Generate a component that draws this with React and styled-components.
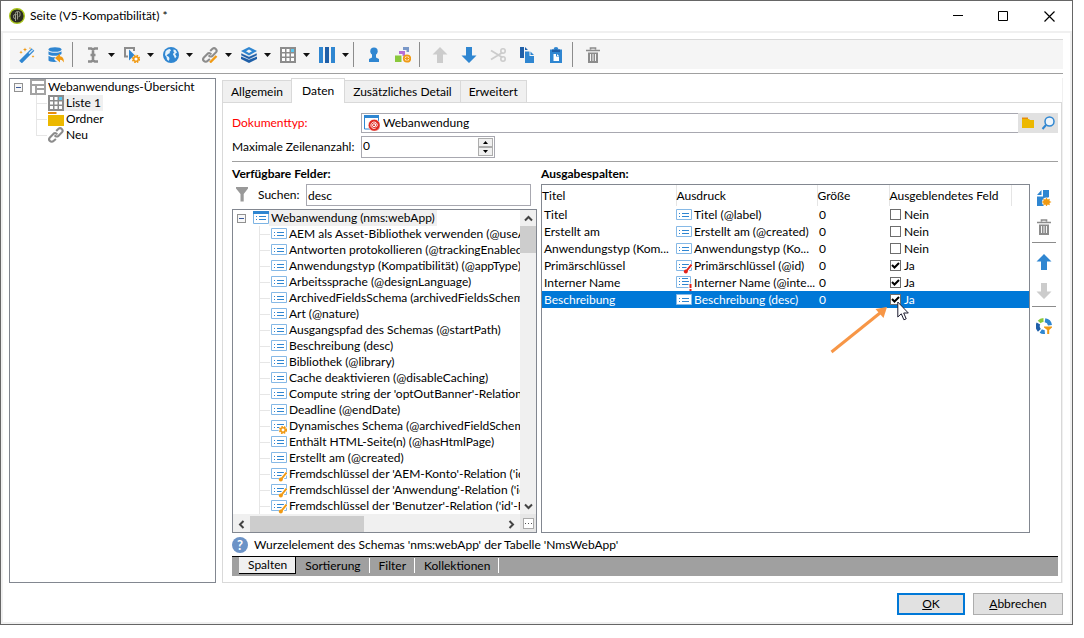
import React, { useState } from "react";
import styled, { createGlobalStyle, css } from "styled-components";

const Global = createGlobalStyle`
  * { box-sizing: border-box; }
  body {
    margin: 0;
    background: #fff;
    color: #000;
    font: 12px/16px Lato, "Open Sans", sans-serif;
  }
  button, input { font: inherit; color: inherit; margin: 0; }
  button { border: 0; padding: 0; background: none; }
  ul { list-style: none; margin: 0; padding: 0; }
  svg { display: block; flex: none; }
`;

/* ---------- icons ---------- */

const Icon = ({ size = 16, children, ...rest }) => (
  <svg width={size} height={size} viewBox="0 0 16 16" fill="none" aria-hidden="true" {...rest}>
    {children}
  </svg>
);

const BLUE = "#2f86d1";
const NAVY = "#1f5fa8";
const GREY = "#8c8c8c";
const ORANGE = "#f09a14";

const WandIcon = () => (
  <Icon>
    <path d="M1.500 15 14 2.500" stroke={BLUE} strokeWidth="3.800" />
    <path d="M10 6.500 13.800 2.700" stroke="#cfe5f7" strokeWidth="1.400" />
    <path d="M6 .5 6.600 2 8 2.600 6.600 3.200 6 4.700 5.400 3.200 4 2.600 5.400 2ZM2 3.500 2.500 4.800 3.700 5.300 2.500 5.800 2 7 1.500 5.800.3 5.300 1.500 4.800ZM14 8l.4 1 1 .5-1 .4-.4 1-.4-1-1-.4 1-.5ZM11 0l.3.800.8.3-.8.3-.3.800-.3-.8-.8-.3.800-.3Z" fill={ORANGE} />
  </Icon>
);
const DatabaseIcon = () => (
  <Icon>
    <ellipse cx="7" cy="2.500" rx="6.500" ry="2.300" fill={BLUE} />
    <path d="M.5 4.300c2.500 2 10.500 2 13 0V7c-2 2-10.500 2.500-13 .5ZM.5 8.700c2.500 1.700 5 1.700 7 1.500L6 12c1 1.500 2 2 3.500 2.600C5 15.400.8 14.500.5 13.500Z" fill={BLUE} />
    <path d="M12 6.500v2.700c3 .3 4.200 3 3.700 6.300-1-2-2-2.700-3.700-2.700v2.700L7 11Z" fill={ORANGE} />
  </Icon>
);
const CursorTextIcon = () => (
  <Icon>
    <path d="M3 1.500h3.200L8 2.700l1.800-1.200H13M3 14.500h3.200L8 13.300l1.800 1.200H13M8 2.500v11M5.500 8h5" stroke={GREY} strokeWidth="2.600" />
  </Icon>
);
const Gear = ({ cx, cy, r }) => (
  <g>
    <circle cx={cx} cy={cy} r={r} stroke={ORANGE} strokeWidth="1.800" strokeDasharray="1.600 1" fill="none" />
    <circle cx={cx} cy={cy} r={r - 1} stroke={ORANGE} strokeWidth="1.500" fill="#fff" />
  </g>
);
const PlayGearIcon = () => (
  <Icon>
    <path d="M4 9.500H1V1h9v3" stroke={GREY} strokeWidth="2" />
    <path d="M5 2.500 10.500 8 5 13.500Z" fill={BLUE} />
    <Gear cx={12} cy={12} r={3.300} />
  </Icon>
);
const GlobeIcon = () => (
  <Icon>
    <circle cx="8" cy="8" r="8" fill={BLUE} />
    <path d="M2.500 4.500c1-1.500 2.500-2.500 4.500-2.500l1 1.500L6.500 5l.5 1-2 1-1.500 1.500L6 10l.5 2-1 2L4 12.500 3.500 10 2 8ZM10.500 2.500l2 .5L14 5.500 12 7l1.500 2.500L12 11.500l-1-2.500L10 7.500l.5-1.500 1-.5-1-1Z" fill="#e5f2fb" />
  </Icon>
);
const Links = () => (
  <path d="M6.800 8.200a2.400 2.400 0 0 0 3.400 1l3.900-4a2.500 2.500 0 0 0-3.600-3.400L8.200 4M9.200 7.500a2.400 2.400 0 0 0-3.400-1l-3.900 4a2.500 2.500 0 0 0 3.600 3.500L7.900 12" stroke={GREY} strokeWidth="2.100" />
);
const LinkIcon = () => (
  <Icon>
    <Links />
  </Icon>
);
const LinkPenIcon = () => (
  <Icon>
    <Links />
    <path d="m8 15.500 6.500-6.500" stroke={ORANGE} strokeWidth="2.400" />
  </Icon>
);
const LayersIcon = () => (
  <Icon>
    <path d="M0 9.500 8 12.500l8-3v2.500L8 16l-8-4Z" fill={NAVY} />
    <path d="M0 6 8 9.500 16 6v2.500l-8 4-8-4Z" fill={NAVY} stroke="#f5f5f5" strokeWidth=".5" />
    <path d="M0 4 8 0l8 4-8 4.500Z" fill={BLUE} />
    <path d="m5 4.200 3-1.700 3 1.700L8 6Z" fill="#f5f5f5" />
  </Icon>
);
const GridIcon = () => (
  <Icon>
    <path d="M0 0h16v16H0Z" fill={GREY} />
    <path d="M2 2h3v3H2ZM6.500 2h3v3h-3ZM2 6.500h3v3H2ZM6.500 6.500h3v3h-3ZM11 6.500h3v3h-3ZM2 11h3v3H2ZM6.500 11h3v3h-3ZM11 11h3v3h-3Z" fill="#fff" />
    <path d="M11 2h3v3h-3Z" fill="#5bc8f0" />
  </Icon>
);
const ColumnsIcon = () => (
  <Icon>
    <path d="M0 0h4v16H0ZM12 0h4v16h-4Z" fill={BLUE} />
    <path d="M6 0h4v16H6Z" fill={NAVY} />
  </Icon>
);
const PersonIcon = () => (
  <Icon>
    <circle cx="8" cy="4.200" r="3.700" fill={BLUE} />
    <path d="M6 6h4v4.500l3 1.500v3H3v-3l3-1.500Z" fill={BLUE} />
  </Icon>
);
const BlocksIcon = () => (
  <Icon>
    <path d="M8 0h6v5h-2.500V3H8Z" fill="#7a98c8" />
    <path d="M4 4h6v5H7.500V7H4Z" fill="#b66fd8" />
    <path d="M0 8.500h6.500V15H0Z" fill="#8ac83c" />
    <circle cx="12" cy="11.500" r="3.200" stroke={ORANGE} strokeWidth="1.800" fill="#fff" />
    <path d="M12 9.500v4M10 11.500h4" stroke={ORANGE} strokeWidth="1.600" />
  </Icon>
);
const ArrowIcon = ({ down, muted }) => (
  <Icon transform={down ? "rotate(180)" : undefined}>
    <path d="M8 0 15.500 7.500H11V16H5V7.500H.5Z" fill={muted ? "#cccccc" : BLUE} />
  </Icon>
);
const ScissorsIcon = () => (
  <Icon>
    <path d="m1 3.500 11.500 7M1 12.500l11.500-7" stroke="#ccc" strokeWidth="1.800" />
    <circle cx="13" cy="4" r="2.200" stroke="#ccc" strokeWidth="1.600" />
    <circle cx="13" cy="12" r="2.200" stroke="#ccc" strokeWidth="1.600" />
  </Icon>
);
const CopyIcon = () => (
  <Icon>
    <path d="M1 0h4v11H1ZM6 0l3 3H6Z" fill={NAVY} />
    <path d="M6 4.500h4.500V9H15v7H6ZM11.500 4.500 15 8h-3.500Z" fill={BLUE} />
  </Icon>
);
const PasteIcon = () => (
  <Icon>
    <path d="M2 2.500h12V16H2Z" fill={BLUE} />
    <path d="M4 2.500h2.500a1.500 1.500 0 0 1 3 0H12V5H4Z" fill={NAVY} />
    <path d="M8 0a2.300 2.300 0 0 0-2.300 2.500h4.600A2.300 2.300 0 0 0 8 0Z" fill={BLUE} />
    <path d="M5.500 7H8v2.500h3V14H5.500ZM9 7l2 2H9Z" fill="#fff" />
  </Icon>
);
const TrashIcon = () => (
  <Icon>
    <path d="M5.500 2.500V1h5v1.500M1 3.500h14" stroke={GREY} strokeWidth="1.600" />
    <path d="M3 5.500h10V16H3Z" fill={GREY} />
    <path d="M5.500 7v7M8 7v7M10.500 7v7" stroke="#f5f5f5" strokeWidth="1" />
  </Icon>
);
const PageIcon = () => (
  <Icon>
    <path d="M0 0h16v16H0Z" fill="#a3a3a3" />
    <path d="M2 2h12v3H2ZM2 7h3v7H2ZM7 7h7v2H7ZM7 11h7v3H7Z" fill="#fff" />
  </Icon>
);
const FolderIcon = () => (
  <Icon>
    <path d="M0 1h8.500v2H0Z" fill="#e88e0c" />
    <path d="M0 4h16v11H0Z" fill="#ecb800" />
  </Icon>
);
const OpenFolderIcon = () => (
  <Icon>
    <path d="M2 2.500h6V4H2Z" fill="#e88e0c" />
    <path d="M2 4h7l1 1h4v8H2Z" fill="#ecb800" />
  </Icon>
);
const SearchIcon = () => (
  <Icon>
    <circle cx="9.500" cy="6.500" r="4.500" stroke={BLUE} strokeWidth="1.500" fill="#eef5fb" />
    <path d="m6 10-3.500 4" stroke={BLUE} strokeWidth="2" />
  </Icon>
);
const FunnelIcon = () => (
  <Icon>
    <path d="M2 0h12v1.500L9.700 7v7.500H6.500V7L2 1.500Z" fill="#999" />
  </Icon>
);
const WebAppIcon = () => (
  <Icon>
    <path d="M.5 1.500h14V14H.5Z" fill="#fff" stroke={BLUE} />
    <path d="M0 0h15v3H0Z" fill={BLUE} />
    <circle cx="10.200" cy="10.200" r="6" fill="#e02b22" stroke="#fff" strokeWidth=".6" />
    <circle cx="10" cy="10.200" r="1.500" stroke="#fff" />
    <path d="M11.600 8.500v2.400c.3 1.200 1.700.8 1.700-.7a3.200 3.200 0 1 0-1.600 2.800" stroke="#fff" strokeWidth=".9" />
  </Icon>
);
const FieldIcon = ({ kind = "field" }) => (
  <Icon>
    {kind === "root" ? (
      <>
        <path d="M.5 1.500h15v12H.5Z" fill="#fff" stroke="#7db4e4" />
        <path d="M0 1h16v3H0Z" fill={BLUE} />
        <path d="M3 6.500h1M6 6.500h7M3 9.500h1M6 9.500h7" stroke={BLUE} />
      </>
    ) : (
      <>
        <path d={kind === "required" ? "M.5 1.500h14v11H.5Z" : "M.5 2.500h15v10H.5Z"} fill="#fff" stroke="#86b9e6" />
        {kind === "required" && <path d="M3 3.500h1M6 3.500h6" stroke={BLUE} />}
        <path d="M3 6.500h1M6 6.500h7M3 9.500h1M6 9.500h7" stroke={BLUE} />
      </>
    )}
    {(kind === "key" || kind === "foreign") && (
      <>
        <path d="m9.500 14 6-7.500" stroke="#fff" strokeWidth="4" />
        <path d="m10 13.500 5.500-7" stroke={kind === "key" ? "#e3231b" : ORANGE} strokeWidth="2" />
        <circle cx="9.800" cy="13.500" r="2" fill={kind === "key" ? "#e3231b" : ORANGE} />
      </>
    )}
    {kind === "dynamic" && (
      <>
        <circle cx="12" cy="12" r="4.500" fill="#fff" />
        <Gear cx={12} cy={12} r={3.200} />
      </>
    )}
    {kind === "required" && (
      <>
        <path d="M12.500 8.500h3.500V16h-3.500Z" fill="#fff" />
        <path d="M13.500 9h2v4h-2ZM13.500 14h2v2h-2Z" fill="#e3231b" />
      </>
    )}
  </Icon>
);
const NewDocIcon = () => (
  <Icon>
    <path d="M1 5 5.500 0v5ZM7 0h6v7l-3 2v7H1V6.500h6Z" fill={BLUE} />
    <circle cx="10.500" cy="12" r="4.500" fill="#fff" />
    <path d="m10.500 7.500 1.200 2 2.100-.8-.3 2.200 2 1.100-2 1.100.3 2.200-2.100-.8-1.200 2-1.200-2-2.100.8.3-2.200-2-1.100 2-1.100-.3-2.200 2.100.8Z" fill={ORANGE} />
  </Icon>
);
const DistributionIcon = () => (
  <Icon>
    <path d="M9 2.200a6 6 0 0 1 5 5" stroke={BLUE} strokeWidth="4" />
    <path d="M3.200 4A6 6 0 0 1 7.500 2" stroke="#8ac83c" strokeWidth="4" />
    <path d="M2.400 5.500a6 6 0 0 0 1 6.800" stroke={NAVY} strokeWidth="4" />
    <path d="M4.800 13a6 6 0 0 0 4 1" stroke={BLUE} strokeWidth="4" />
    <path d="M8 8.500h8v1L13.200 12v4h-2v-4L8 9.500Z" fill={ORANGE} />
  </Icon>
);
const AppLogo = () => (
  <Icon>
    <circle cx="8" cy="8" r="7.300" fill="#2b2b22" stroke="#a8c41c" strokeWidth="1.400" />
    <path d="M8.500 3.500v8M7.500 6.500H6a1.700 1.700 0 0 0-1.500 1.700v.8A1.500 1.500 0 0 0 6 10.500h1M6.500 13V5.500a2 2 0 0 1 2-2h.7a1.800 1.800 0 0 1 1.800 1.700V7a1.700 1.700 0 0 1-1.500 1.800" stroke="#9a9c8c" />
  </Icon>
);
const Chevron = ({ dir }) => (
  <svg width="9" height="9" viewBox="0 0 9 9" fill="none" aria-hidden="true">
    <path
      d={{ up: "M1 6.500 4.500 3 8 6.500", down: "M1 2.500 4.500 6 8 2.500", left: "M6.500 1 3 4.500 6.500 8", right: "M2.500 1 6 4.500 2.500 8" }[dir]}
      stroke="#444"
      strokeWidth="2"
    />
  </svg>
);

/* ---------- window ---------- */

const Window = styled.div`
  margin: 0 11px 13px 0;
  border: 1px solid #666;
`;
const TitleBar = styled.header`
  display: flex;
  align-items: center;
  height: 30px;
  padding: 0 14px 0 8px;
  gap: 5px;
`;
const WindowTitle = styled.h1`
  flex: 1;
  margin: 0;
  font-size: 12px;
  font-weight: 400;
`;
const WindowControls = styled.div`
  display: flex;
  gap: 29px;
`;
const WindowButton = styled.button`
  display: grid;
  place-items: center;
  width: 17px;
  height: 17px;
`;
const Frame = styled.main`
  border: 2px solid #f0f0f0;
  padding: 6px 7px 7px 6px;
`;
const ToolStrip = styled.div`
  display: flex;
  align-items: center;
  height: 30px;
  margin-left: 1px;
  padding: 0 0 0 2px;
  background: #f5f5f5;
  border-top: 1px solid #d9d9d9;
`;
const ToolButton = styled.button`
  display: flex;
  align-items: center;
  gap: 7px;
  width: ${(p) => (p.$menu ? 39 : 29)}px;
  padding-left: 7px;
`;
const Divider = styled.div`
  width: 1px;
  height: 25px;
  margin: 0 5px 0 2px;
  background: #8c8c8c;
`;
const Rule = styled.hr`
  height: 1px;
  margin: ${(p) => p.$space}px 0;
  border: 0;
  background: #a0a0a0;
`;
const Caret = () => (
  <svg width="7" height="4" viewBox="0 0 7 4" aria-hidden="true">
    <path d="M0 0h7L3.500 4Z" fill="#111" />
  </svg>
);
const Columns = styled.div`
  display: flex;
  gap: 6px;
`;
const Footer = styled.footer`
  display: flex;
  justify-content: flex-end;
  gap: 8px;
  margin-top: 10px;
`;
const PushButton = styled.button`
  min-width: ${(p) => (p.$primary ? 68 : 90)}px;
  height: 22px;
  background: #e1e1e1;
  border: ${(p) => (p.$primary ? "2px solid #0078d7" : "1px solid #adadad")};
`;

/* ---------- trees ---------- */

const TreeBox = styled.nav`
  width: 207px;
  border: 1px solid #828790;
`;
const TreeRow = styled.li`
  display: flex;
  align-items: center;
  height: 16px;
  white-space: nowrap;
`;
const Expander = styled.button`
  flex: none;
  width: 9px;
  height: 9px;
  margin: 0 7px 0 4px;
  border: 1px solid #919191;
  background: linear-gradient(#3c5a9a, #3c5a9a) center / 5px 1px no-repeat #f7f7f7;
`;
const Branch = styled.span`
  flex: none;
  align-self: ${(p) => (p.$last ? "flex-start" : "stretch")};
  width: 12px;
  height: ${(p) => (p.$last ? 9 : 16)}px;
  margin-left: 26px;
  border-left: 1px solid #e6e6e6;
  background: linear-gradient(#e6e6e6, #e6e6e6) 0 8px / 10px 1px no-repeat;
`;
const TreeLabel = styled.span`
  padding: 0 2px;
  ${(p) => p.$marked && css`background: #f0f0f0;`}
`;

/* ---------- tab panel ---------- */

const Editor = styled.section`
  flex: 1;
  min-width: 0;
  border-right: 1px solid #f0f0f0;
`;
const Tabs = styled.div`
  display: flex;
  align-items: flex-end;
  height: 24px;
`;
const Tab = styled.button`
  height: 22px;
  padding: 0 8px;
  background: #f0f0f0;
  border: 1px solid #d9d9d9;
  border-width: 1px 1px 0 0;
  &:first-child { border-left-width: 1px; }
  ${(p) => p.$active && css`
    z-index: 1;
    height: 25px;
    margin: 0 0 -1px -1px;
    padding: 0 10px;
    border-left-width: 1px;
    background: #fff;
  `}
`;
const Panel = styled.div`
  padding: 10px 3px 6px 9px;
  border: 1px solid #d9d9d9;
`;
const Field = styled.div`
  display: flex;
  margin-bottom: 3px;
`;
const FieldLabel = styled.label`
  align-self: center;
  width: 129px;
  white-space: nowrap;
  color: ${(p) => (p.$required ? "#f00" : "inherit")};
`;
const DocumentBox = styled.div`
  display: flex;
  align-items: center;
  flex: 1;
  height: 20px;
  padding-left: 2px;
  border: 1px solid #a8a8b0;
  border-right: 0;
`;
const BareInput = styled.input`
  flex: 1;
  min-width: 0;
  height: 16px;
  padding: 0 0 0 ${(p) => p.$inset}px;
  border: 0;
  outline: 0;
  background: transparent;
`;
const PickerButtons = styled.div`
  display: flex;
  align-items: center;
  gap: 4px;
  padding: 0 2px;
  background: #e1e1e1;
`;
const SpinBox = styled.div`
  display: flex;
  width: 134px;
  height: 22px;
  padding: 1px;
  border: 1px solid #a8a8b0;
`;
const SpinButtons = styled.div`
  display: flex;
  flex-direction: column;
  width: 15px;
`;
const SpinButton = styled.button`
  display: grid;
  place-items: center;
  flex: 1;
  min-height: 0;
  background: #f0f0f0;
  border: 1px solid #adadad;
`;
const Workspace = styled.div`
  display: flex;
`;
const Fields = styled.section`
  width: 305px;
  margin-right: 4px;
`;
const Output = styled.section`
  display: flex;
  flex-direction: column;
  flex: 1;
  min-width: 0;
`;
const Heading = styled.h2`
  margin: 4px 0 2px;
  font-size: 12px;
  line-height: 16px;
  font-weight: 700;
`;
const SearchRow = styled.div`
  display: flex;
  align-items: center;
  height: 22px;
  margin: 0 6px 3px 2px;
`;
const SearchLabel = styled.label`
  width: 48px;
  margin-left: 8px;
`;
const SearchInput = styled.input`
  flex: 1;
  min-width: 0;
  height: 22px;
  padding: 0 1px;
  border: 1px solid #a8a8b0;
  outline: 0;
`;
const FieldTree = styled.div`
  display: grid;
  grid-template-columns: minmax(0, 1fr) 16px;
  grid-template-rows: auto 18px;
  border: 1px solid #828790;
`;
const FieldRows = styled.ul`
  overflow: hidden;
`;
const Scrollbar = styled.div`
  display: flex;
  flex-direction: ${(p) => (p.$vertical ? "column" : "row")};
  background: #f0f0f0;
  padding: ${(p) => (p.$vertical ? "0" : "2px 0 0")};
`;
const ScrollButton = styled.button`
  display: grid;
  place-items: center;
  width: 17px;
  height: 16px;
`;
const Track = styled.div`
  flex: 1;
`;
const Thumb = styled.div`
  background: #cdcdcd;
  ${(p) => (p.$vertical ? css`height: 27px;` : css`width: 45%; height: 100%;`)}
`;
const MoreButton = styled.button`
  display: grid;
  place-items: center;
  width: 11px;
  height: 11px;
  margin: 4px 0 0 3px;
  border: 1px solid #aaa;
  background: #fff;
`;
const MoreCell = styled.div`
  background: #e6e6e6;
`;

/* ---------- output columns ---------- */

const TableBox = styled.div`
  flex: 1;
  border: 1px solid #828790;
`;
const Table = styled.table`
  width: 100%;
  table-layout: fixed;
  border-collapse: collapse;
  th {
    height: 21px;
    padding: 0;
    font-weight: 400;
    text-align: left;
    border-right: 1px solid #e5e5e5;
  }
  th:last-child { border-right: 0; }
`;
const OutputRow = styled.tr`
  ${(p) => p.$selected && css`
    background: #0078d7;
    color: #fff;
  `}
`;
const Cell = styled.td`
  position: relative;
  height: 17px;
  padding: 0 0 0 ${(p) => p.$inset}px;
  white-space: nowrap;
`;
const Expression = styled.div`
  display: flex;
  align-items: center;
  gap: 2px;
  height: 17px;
`;
const CheckLabel = styled.label`
  display: flex;
  align-items: center;
  gap: 3px;
  color: inherit;
`;
const CheckStack = styled.span`
  display: grid;
  place-items: center;
  > * { grid-area: 1 / 1; }
  svg { pointer-events: none; }
`;
const CheckInput = styled.input`
  appearance: none;
  width: 11px;
  height: 11px;
  border: 1px solid #6d6d6d;
  background: #fff;
`;
const Callout = styled.svg`
  position: absolute;
  left: -59px;
  top: 13px;
`;
const Pointer = styled.svg`
  position: absolute;
  left: 8px;
  top: 10px;
`;
const SideTools = styled.div`
  display: flex;
  flex-direction: column;
  align-items: center;
  gap: 13px;
  width: 24px;
  margin: 28px 2px 0 2px;
`;
const SideRule = styled.hr`
  width: 100%;
  height: 1px;
  margin: -6px 0 -2px;
  border: 0;
  background: #8c8c8c;
`;
const HelpLine = styled.div`
  display: flex;
  align-items: center;
  gap: 6px;
  height: 23px;
`;
const Mark = styled.span`
  display: grid;
  place-items: center;
  width: 16px;
  height: 16px;
  border-radius: 50%;
  background: #6c93c7;
  color: #fff;
  font-size: 13px;
  font-weight: 700;
`;
const SheetTabs = styled.div`
  display: flex;
  height: 20px;
  padding-left: 7px;
  background: #a0a0a0;
  border-top: 1px solid #000;
`;
const SheetTab = styled.button`
  height: 15px;
  margin-top: 1px;
  padding: 0 8px 0 9px;
  line-height: 14px;
  border-right: 1px solid #fff;
  ${(p) => p.$active && css`
    height: 17px;
    margin-top: 0;
    background: #f0f0f0;
    border-right-color: #000;
    border-bottom: 1px solid #000;
  `}
`;

/* ---------- data ---------- */

const fields = [
  ["AEM als Asset-Bibliothek verwenden (@useAemAssets)"],
  ["Antworten protokollieren (@trackingEnabled)"],
  ["Anwendungstyp (Kompatibilität) (@appType)"],
  ["Arbeitssprache (@designLanguage)"],
  ["ArchivedFieldsSchema (archivedFieldsSchema)"],
  ["Art (@nature)"],
  ["Ausgangspfad des Schemas (@startPath)"],
  ["Beschreibung (desc)"],
  ["Bibliothek (@library)"],
  ["Cache deaktivieren (@disableCaching)"],
  ["Compute string der 'optOutBanner'-Relation"],
  ["Deadline (@endDate)"],
  ["Dynamisches Schema (@archivedFieldSchema)", "dynamic"],
  ["Enthält HTML-Seite(n) (@hasHtmlPage)"],
  ["Erstellt am (@created)"],
  ["Fremdschlüssel der 'AEM-Konto'-Relation ('id'-Feld)", "foreign"],
  ["Fremdschlüssel der 'Anwendung'-Relation ('id'-Feld)", "foreign"],
  ["Fremdschlüssel der 'Benutzer'-Relation ('id'-Feld)", "foreign"],
];

const initialRows = [
  { title: "Titel", expr: "Titel (@label)", hidden: false },
  { title: "Erstellt am", expr: "Erstellt am (@created)", hidden: false },
  { title: "Anwendungstyp (Kom...", expr: "Anwendungstyp (Ko...", hidden: false },
  { title: "Primärschlüssel", expr: "Primärschlüssel (@id)", hidden: true, kind: "key" },
  { title: "Interner Name", expr: "Interner Name (@inte...", hidden: true, kind: "required" },
  { title: "Beschreibung", expr: "Beschreibung (desc)", hidden: true, selected: true },
];

const tools = [
  ["Assistent", WandIcon],
  ["Datenbank", DatabaseIcon],
  null,
  ["Eingabefeld", CursorTextIcon, true],
  ["Aktion", PlayGearIcon, true],
  ["Web", GlobeIcon, true],
  ["Link", LinkPenIcon, true],
  ["Ebenen", LayersIcon, true],
  ["Tabelle", GridIcon, true],
  ["Spalten", ColumnsIcon, true],
  null,
  ["Person", PersonIcon],
  ["Blöcke", BlocksIcon],
  null,
  ["Nach oben", () => <ArrowIcon muted />],
  ["Nach unten", () => <ArrowIcon down />],
  ["Ausschneiden", ScissorsIcon],
  ["Kopieren", CopyIcon],
  ["Einfügen", PasteIcon],
  null,
  ["Löschen", TrashIcon],
];

const pages = [
  ["Liste 1", GridIcon],
  ["Ordner", FolderIcon],
  ["Neu", LinkIcon],
];

export default function App() {
  const [rows, setRows] = useState(initialRows);
  const toggle = (i) => setRows(rows.map((r, n) => (n === i ? { ...r, hidden: !r.hidden } : r)));

  return (
    <>
      <Global />
      <Window>
        <TitleBar>
          <AppLogo />
          <WindowTitle>Seite (V5-Kompatibilität) *</WindowTitle>
          <WindowControls>
            <WindowButton aria-label="Minimieren">
              <svg width="10" height="10"><path d="M0 4.500h10" stroke="#000" /></svg>
            </WindowButton>
            <WindowButton aria-label="Maximieren">
              <svg width="11" height="11"><path d="M.5.5h9v9h-9Z" fill="none" stroke="#000" /></svg>
            </WindowButton>
            <WindowButton aria-label="Schließen">
              <svg width="11" height="11"><path d="m.5.500 10 10m0-10-10 10" stroke="#000" strokeWidth="1.200" /></svg>
            </WindowButton>
          </WindowControls>
        </TitleBar>
        <Frame>
          <ToolStrip role="toolbar">
            {tools.map((t, i) => {
              if (!t) return <Divider key={i} />;
              const [label, Glyph, menu] = t;
              return (
                <ToolButton key={i} aria-label={label} $menu={menu}>
                  <Glyph />
                  {menu && <Caret />}
                </ToolButton>
              );
            })}
          </ToolStrip>
          <Rule $space={4} />
          <Columns>
            <TreeBox>
              <ul>
                <TreeRow>
                  <Expander aria-label="Zuklappen" />
                  <PageIcon />
                  <TreeLabel>Webanwendungs-Übersicht</TreeLabel>
                </TreeRow>
                {pages.map(([label, Glyph], i) => (
                  <TreeRow key={label}>
                    <Branch $last={i === pages.length - 1} />
                    <Glyph />
                    <TreeLabel $marked={i === 0}>{label}</TreeLabel>
                  </TreeRow>
                ))}
              </ul>
            </TreeBox>
            <Editor>
              <Tabs>
                <Tab>Allgemein</Tab>
                <Tab $active>Daten</Tab>
                <Tab>Zusätzliches Detail</Tab>
                <Tab>Erweitert</Tab>
              </Tabs>
              <Panel>
                <Field>
                  <FieldLabel $required htmlFor="doctype">Dokumenttyp:</FieldLabel>
                  <DocumentBox>
                    <WebAppIcon />
                    <BareInput id="doctype" $inset={3} defaultValue="Webanwendung" />
                  </DocumentBox>
                  <PickerButtons>
                    <button aria-label="Öffnen"><OpenFolderIcon /></button>
                    <button aria-label="Suchen"><SearchIcon /></button>
                  </PickerButtons>
                </Field>
                <Field>
                  <FieldLabel htmlFor="maxrows">Maximale Zeilenanzahl:</FieldLabel>
                  <SpinBox>
                    <BareInput id="maxrows" $inset={0} defaultValue="0" />
                    <SpinButtons>
                      <SpinButton aria-label="Mehr">
                        <svg width="5" height="3"><path d="M2.500 0 5 3H0Z" /></svg>
                      </SpinButton>
                      <SpinButton aria-label="Weniger">
                        <svg width="5" height="3"><path d="M0 0h5L2.500 3Z" /></svg>
                      </SpinButton>
                    </SpinButtons>
                  </SpinBox>
                </Field>
                <Rule $space={0} />
                <Workspace>
                  <Fields>
                    <Heading>Verfügbare Felder:</Heading>
                    <SearchRow>
                      <FunnelIcon />
                      <SearchLabel htmlFor="search">Suchen:</SearchLabel>
                      <SearchInput id="search" defaultValue="desc" />
                    </SearchRow>
                    <FieldTree>
                      <FieldRows>
                        <TreeRow>
                          <Expander aria-label="Zuklappen" />
                          <FieldIcon kind="root" />
                          <TreeLabel $marked>Webanwendung (nms:webApp)</TreeLabel>
                        </TreeRow>
                        {fields.map(([label, kind]) => (
                          <TreeRow key={label}>
                            <Branch />
                            <FieldIcon kind={kind} />
                            <TreeLabel>{label}</TreeLabel>
                          </TreeRow>
                        ))}
                      </FieldRows>
                      <Scrollbar $vertical>
                        <ScrollButton aria-label="Hoch"><Chevron dir="up" /></ScrollButton>
                        <Track><Thumb $vertical /></Track>
                        <ScrollButton aria-label="Runter"><Chevron dir="down" /></ScrollButton>
                      </Scrollbar>
                      <Scrollbar>
                        <ScrollButton aria-label="Links"><Chevron dir="left" /></ScrollButton>
                        <Track><Thumb /></Track>
                        <ScrollButton aria-label="Rechts"><Chevron dir="right" /></ScrollButton>
                      </Scrollbar>
                      <MoreCell>
                        <MoreButton aria-label="Mehr anzeigen">
                          <svg width="7" height="1"><path d="M0 .5h7" stroke="#555" strokeDasharray="1 2" /></svg>
                        </MoreButton>
                      </MoreCell>
                    </FieldTree>
                  </Fields>
                  <Output>
                    <Heading>Ausgabespalten:</Heading>
                    <TableBox>
                      <Table>
                        <colgroup>
                          <col width="134" />
                          <col width="141" />
                          <col width="72" />
                          <col width="122" />
                          <col />
                        </colgroup>
                        <thead>
                          <tr>
                            <th>Titel</th>
                            <th>Ausdruck</th>
                            <th>Größe</th>
                            <th>Ausgeblendetes Feld</th>
                            <th aria-label="Rest" />
                          </tr>
                        </thead>
                        <tbody>
                          {rows.map((r, i) => (
                            <OutputRow key={r.title} $selected={r.selected}>
                              <Cell $inset={2}>{r.title}</Cell>
                              <Cell $inset={0}>
                                <Expression>
                                  <FieldIcon kind={r.kind} />
                                  {r.expr}
                                </Expression>
                              </Cell>
                              <Cell $inset={2}>0</Cell>
                              <Cell $inset={1}>
                                <CheckLabel>
                                  <CheckStack>
                                    <CheckInput type="checkbox" checked={r.hidden} onChange={() => toggle(i)} />
                                    {r.hidden && (
                                      <svg width="9" height="9" viewBox="0 0 9 9">
                                        <path d="M1 4 3.500 6.500 8 2" fill="none" stroke="#000" strokeWidth="2" />
                                      </svg>
                                    )}
                                  </CheckStack>
                                  {r.hidden ? "Ja" : "Nein"}
                                </CheckLabel>
                                {r.selected && (
                                  <>
                                    <Callout width="60" height="50" viewBox="0 0 60 50" aria-hidden="true">
                                      <path d="M1.500 48 50 9" stroke="#f79646" strokeWidth="3" />
                                      <path d="M57 3 53.500 14 45.500 5Z" fill="#f79646" />
                                    </Callout>
                                    <Pointer width="13" height="20" viewBox="0 0 13 20" aria-hidden="true">
                                      <path d="M.8 1v15l3.500-3.200 2.600 6 2.300-1-2.500-5.800h4.600Z" fill="#fff" stroke="#1c1c30" />
                                    </Pointer>
                                  </>
                                )}
                              </Cell>
                              <Cell $inset={0} />
                            </OutputRow>
                          ))}
                        </tbody>
                      </Table>
                    </TableBox>
                  </Output>
                  <SideTools>
                    <button aria-label="Neu"><NewDocIcon /></button>
                    <button aria-label="Löschen"><TrashIcon /></button>
                    <SideRule />
                    <button aria-label="Nach oben"><ArrowIcon /></button>
                    <button aria-label="Nach unten"><ArrowIcon down muted /></button>
                    <SideRule />
                    <button aria-label="Verteilung"><DistributionIcon /></button>
                  </SideTools>
                </Workspace>
                <HelpLine>
                  <Mark aria-hidden="true">?</Mark>
                  Wurzelelement des Schemas 'nms:webApp' der Tabelle 'NmsWebApp'
                </HelpLine>
                <SheetTabs>
                  <SheetTab $active>Spalten</SheetTab>
                  <SheetTab>Sortierung</SheetTab>
                  <SheetTab>Filter</SheetTab>
                  <SheetTab>Kollektionen</SheetTab>
                </SheetTabs>
              </Panel>
            </Editor>
          </Columns>
          <Footer>
            <PushButton $primary><u>O</u>K</PushButton>
            <PushButton><u>A</u>bbrechen</PushButton>
          </Footer>
        </Frame>
      </Window>
    </>
  );
}
